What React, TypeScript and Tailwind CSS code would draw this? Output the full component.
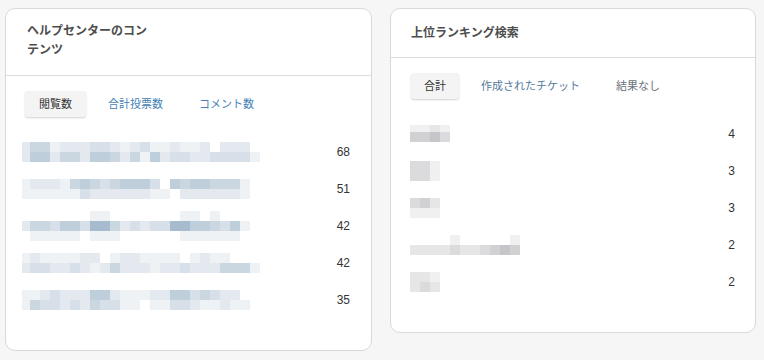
import React from 'react';

type Mosaic = {
  rows: string[];
  heights?: number[];
  firstWidth?: number;
};

type Row = { mosaic: Mosaic; value: number };

const FONT = '"Liberation Sans", "Noto Sans CJK JP", sans-serif';

// level 0..9 -> blend from white toward tint
const mix = (level: number, tint: [number, number, number]) => {
  if (level === 0) return 'transparent';
  const t = Math.min(1, level / 7.5);
  const c = tint.map((v) => Math.round(251 - (251 - v) * t));
  return `rgb(${c[0]},${c[1]},${c[2]})`;
};

const BLUE: [number, number, number] = [160, 184, 203];
const GRAY: [number, number, number] = [172, 172, 177];

const LEFT_ROWS: Row[] = [
  {
    value: 68,
    mosaic: {
      firstWidth: 8,
      rows: ['24412223321231121120222', '255244255424152332233331'],
    },
  },
  {
    value: 51,
    mosaic: {
      firstWidth: 8,
      rows: ['12221454345553054554441', '11111132222221102222221'],
    },
  },
  {
    value: 42,
    mosaic: {
      firstWidth: 8,
      rows: [
        '00000001100000001101000',
        '24435537742323377554351',
        '01111101110000001111110',
      ],
    },
  },
  {
    value: 42,
    mosaic: {
      firstWidth: 8,
      rows: ['1211112201221111012110', '233223212422212232224441'],
    },
  },
  {
    value: 35,
    mosaic: {
      firstWidth: 8,
      rows: ['1123222552111225534322', '14332324331101133211211'],
    },
  },
];

const RIGHT_ROWS: Row[] = [
  { value: 4, mosaic: { rows: ['1121', '4453'], heights: [7, 10] } },
  { value: 3, mosaic: { rows: ['331', '331'] } },
  { value: 3, mosaic: { rows: ['342', '111'] } },
  { value: 2, mosaic: { rows: ['00001000001', '22223223454'] } },
  { value: 2, mosaic: { rows: ['221', '232'] } },
];

const Pixelated = ({ mosaic, tint }: { mosaic: Mosaic; tint: [number, number, number] }) => (
  <div className="flex flex-col">
    {mosaic.rows.map((r, ri) => (
      <div key={ri} className="flex">
        {r.split('').map((ch, ci) => (
          <div
            key={ci}
            style={{
              width: ci === 0 && mosaic.firstWidth ? mosaic.firstWidth : 10,
              height: mosaic.heights ? mosaic.heights[ri] : 10,
              background: mix(Number(ch), tint),
            }}
          />
        ))}
      </div>
    ))}
  </div>
);

const Tabs = ({ tabs, widths, colors }: { tabs: string[]; widths: string[]; colors: string[] }) => (
  <div className="flex gap-[10px]">
    {tabs.map((t, i) =>
      i === 0 ? (
        <div
          key={t}
          className={`${widths[i]} h-[26px] flex items-center justify-center rounded-[3px] bg-[#f4f4f4] shadow-[0_1px_2px_rgba(0,0,0,0.18)] text-[11px] text-[#333] whitespace-nowrap`}
        >
          {t}
        </div>
      ) : (
        <div
          key={t}
          className={`${widths[i]} ${colors[i]} h-[26px] flex items-center px-3 text-[11px] whitespace-nowrap`}
        >
          {t}
        </div>
      )
    )}
  </div>
);

export default function App() {
  return (
    <div
      className="min-h-[360px] w-[764px] bg-[#f6f6f6] flex items-start gap-[18px] pl-[5px] pt-[8px]"
      style={{ fontFamily: FONT }}
    >
      {/* Help center content */}
      <div className="w-[367px] bg-white border border-[#d9d9d9] rounded-[10px] pb-[32px]">
        <div className="pl-[21px] pt-[13px] pb-[15px] border-b border-[#dcdcdc]">
          <h2 className="w-[128px] text-[12px] leading-[19px] font-bold text-[#4d4d4d]">
            ヘルプセンターのコンテンツ
          </h2>
        </div>
        <div className="pl-[19px] mt-[15px]">
          <Tabs
            tabs={['閲覧数', '合計投票数', 'コメント数']}
            widths={['w-[61px]', 'w-[81px]', 'w-[80px]']}
            colors={['', 'text-[#4481b6]', 'text-[#4481b6]']}
          />
        </div>
        <div className="mt-[16px] pl-[16px] pr-[21px]">
          {LEFT_ROWS.map((r, i) => (
            <div key={i} className="h-[37px] flex items-center justify-between">
              <Pixelated mosaic={r.mosaic} tint={BLUE} />
              <span className="text-[12px] text-[#333]">{r.value}</span>
            </div>
          ))}
        </div>
      </div>

      {/* Top ranking searches */}
      <div className="w-[366px] bg-white border border-[#d9d9d9] rounded-[10px] pb-[32px]">
        <div className="pl-[20px] pt-[15px] pb-[15px] border-b border-[#dcdcdc]">
          <h2 className="text-[12px] leading-[18px] font-bold text-[#4d4d4d]">上位ランキング検索</h2>
        </div>
        <div className="pl-[20px] mt-[15px]">
          <Tabs
            tabs={['合計', '作成されたチケット', '結果なし']}
            widths={['w-[48px]', 'w-[125px]', 'w-[80px]']}
            colors={['', 'text-[#52799c]', 'text-[#6a737c]']}
          />
        </div>
        <div className="mt-[16px] pl-[19px] pr-[20px]">
          {RIGHT_ROWS.map((r, i) => (
            <div key={i} className="h-[37px] flex items-center justify-between">
              <Pixelated mosaic={r.mosaic} tint={GRAY} />
              <span className="text-[12px] text-[#333]">{r.value}</span>
            </div>
          ))}
        </div>
      </div>
    </div>
  );
}
